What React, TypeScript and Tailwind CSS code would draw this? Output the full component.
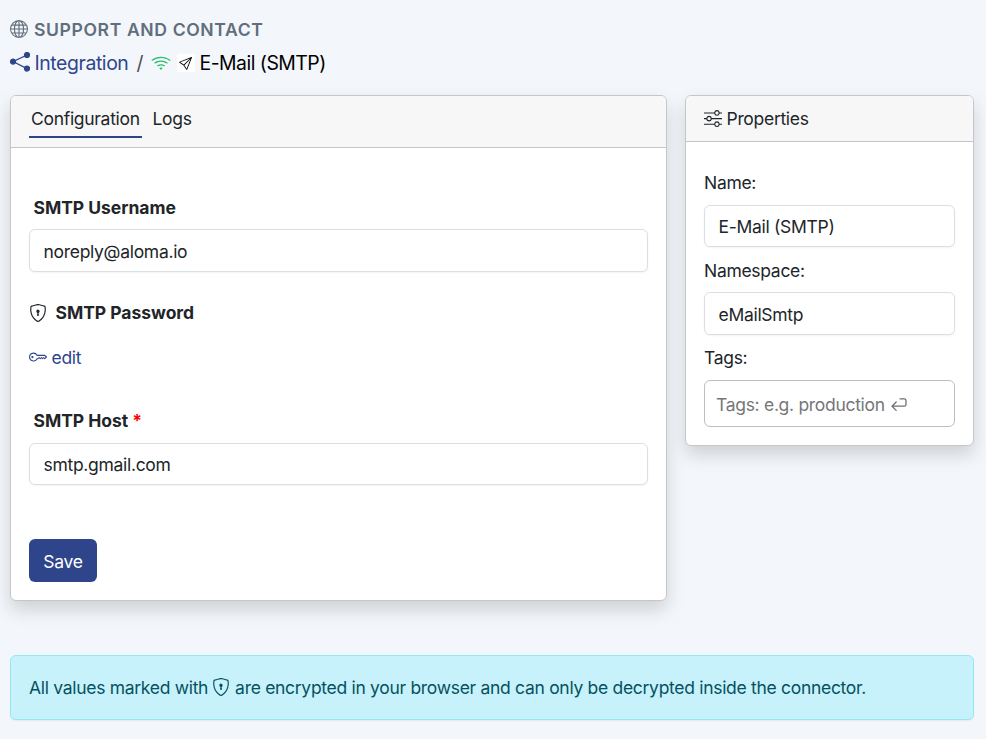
import type { ReactNode } from "react";
import { BsGlobe, BsKey, BsSend, BsShieldLock, BsSliders, BsWifi } from "react-icons/bs";

function ShareIcon() {
  return (
    <svg width="20" height="20" viewBox="0 0 20 20" fill="#2f458b" stroke="#2f458b" strokeWidth="1.2" className="relative -top-px">
      <path d="M17 3 3 9.6 17 16.6" fill="none" />
      <circle cx="17" cy="3" r="2.5" />
      <circle cx="3" cy="9.6" r="2.5" />
      <circle cx="17" cy="16.6" r="2.5" />
    </svg>
  );
}

function ReturnIcon() {
  return (
    <svg width="16" height="14" viewBox="0 0 16 14" fill="none" stroke="#6f7174" strokeWidth="1.3" strokeLinejoin="round" strokeLinecap="round">
      <path d="M9 0.8H13.3Q15 0.8 15 2.5V6.4Q15 8.2 13.3 8.2H1M5.2 4 1 8.2 5.2 12.4" />
    </svg>
  );
}

function Field({ value, className }: { value: string; className: string }) {
  return (
    <div className={"flex shrink-0 items-center rounded-[6px] border border-[#dadfe4] bg-white pl-[13.5px] shadow-[0_1px_2px_rgba(0,0,0,0.05)] " + className}>
      {value}
    </div>
  );
}

function Card({ children, className }: { children: ReactNode; className: string }) {
  return (
    <section className={"flex shrink-0 flex-col overflow-hidden rounded-[6px] border border-[#c5c6c8] bg-white shadow-[0_9px_18px_rgba(0,0,0,0.15)] " + className}>
      {children}
    </section>
  );
}

export default function App() {
  return (
    <main className="flex h-[739px] w-[986px] flex-col overflow-hidden bg-[#f3f6fa] px-[10px] font-['Inter',sans-serif] text-[17.5px] leading-[26px] tracking-[-0.3px] whitespace-nowrap text-[#212529]">
      <h1 className="mt-[16px] flex h-[26px] shrink-0 items-center text-[17.6px] font-semibold tracking-[0.6px] text-[#616e7c]">
        <BsGlobe size={18} className="mr-[6px]" />
        <span className="pt-[2px]">SUPPORT AND CONTACT</span>
      </h1>
      <nav className="mt-[7px] flex h-[28px] shrink-0 items-center text-[19.4px] tracking-[-0.4px] text-black">
        <ShareIcon />
        <span className="ml-[4.5px] w-[93.5px] text-[#2f458b]">Integration</span>
        <span className="ml-[8.5px] w-[14.5px] text-[#495057]">/</span>
        <BsWifi size={20} className="text-[#22bf68]" />
        <span className="ml-[5.5px] flex h-[18px] w-[18px] items-center justify-center bg-white"><BsSend size={13} className="relative top-[0.5px]" /></span>
        <span className="ml-[5px] tracking-[-0.5px]">E-Mail (SMTP)</span>
      </nav>
      <div className="mt-[18px] flex shrink-0 items-start gap-[18px]">
        <Card className="h-[506px] w-[657px]">
          <div className="flex h-[52px] shrink-0 items-start border-b border-[#c5c6c8] bg-[#f7f7f7] pl-[18px]">
            <div className="mt-[9px] h-[33px] w-[113px] border-b-2 border-[#2f458b] pt-px pl-[2px]">Configuration</div>
            <div className="mt-[10px] ml-[10.5px]">Logs</div>
          </div>
          <div className="flex grow flex-col px-[18px]">
            <div className="mt-[47px] ml-[4.5px] h-[26px] font-bold tracking-[-0.03px]">SMTP Username</div>
            <Field value="noreply@aloma.io" className="mt-[8px] h-[43px] pt-[2px]" />
            <div className="mt-[28px] flex h-[26px] items-center font-bold tracking-[-0.03px]">
              <BsShieldLock size={18} className="mr-[8.5px]" />SMTP Password
            </div>
            <div className="mt-[19px] flex h-[26px] items-center text-[#2f458b]">
              <BsKey size={18} className="relative -top-px mr-[4.5px]" />edit
            </div>
            <div className="mt-[37px] ml-[4.5px] h-[26px] font-bold tracking-[-0.03px]">SMTP Host <span className="text-[#ff0000]">*</span></div>
            <Field value="smtp.gmail.com" className="mt-[9px] h-[42px] pt-px" />
            <button className="mt-[54px] h-[43px] w-[68px] rounded-[6px] bg-[#2f458b] pt-[2px] text-white">Save</button>
          </div>
        </Card>
        <Card className="h-[351px] w-[289px]">
          <div className="flex h-[46px] shrink-0 items-center border-b border-[#c5c6c8] bg-[#f7f7f7] pl-[18px]">
            <BsSliders size={18} className="relative -top-px mr-[4.5px]" />Properties
          </div>
          <div className="flex flex-col px-[18px]">
            <div className="mt-[28px] h-[26px]">Name:</div>
            <Field value="E-Mail (SMTP)" className="mt-[9px] h-[42px] pt-px" />
            <div className="mt-[11px] h-[26px]">Namespace:</div>
            <Field value="eMailSmtp" className="mt-[8px] h-[43px] pt-[2px]" />
            <div className="mt-[10px] h-[26px]">Tags:</div>
            <div className="mt-[9px] flex h-[47px] items-center rounded-[6px] border border-[#bcbec0] pt-[2px] pl-[11px] text-[#75777a]">
              <span className="mr-[6px]">Tags: e.g. production</span><ReturnIcon />
            </div>
          </div>
        </Card>
      </div>
      <aside className="mt-[54px] flex h-[65px] w-[964px] shrink-0 items-center rounded-[6px] border border-[#93e8f4] bg-[#c7f2fb] pl-[18px] text-[#055160] shadow-[0_1px_2px_rgba(0,0,0,0.06)]">
        All values marked with
        <BsShieldLock size={18} className="relative -top-px mr-[5px] ml-[4px]" />
        are encrypted in your browser and can only be decrypted inside the connector.
      </aside>
    </main>
  );
}
